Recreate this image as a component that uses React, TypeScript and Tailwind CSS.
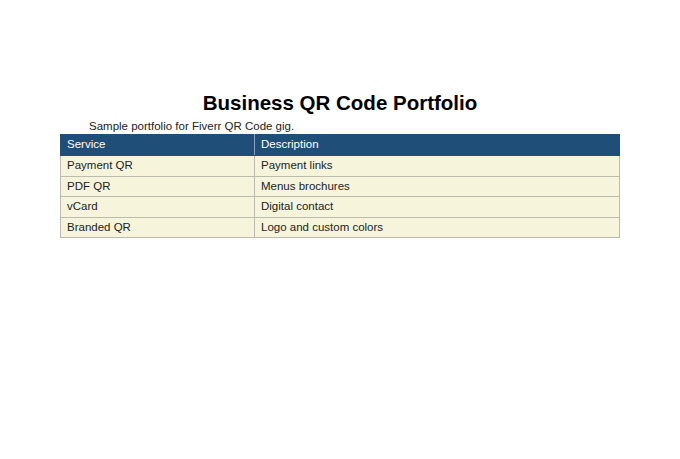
export default function App() {
  const rows = [
    ["Payment QR", "Payment links"],
    ["PDF QR", "Menus brochures"],
    ["vCard", "Digital contact"],
    ["Branded QR", "Logo and custom colors"],
  ];
  return (
    <div className="w-[680px] h-[459px] bg-white pt-[90px] pl-[60px]" style={{ fontFamily: '"Liberation Sans", Arial, sans-serif' }}>
      <div className="w-[560px]">
        <h1 className="text-center font-bold text-[20.5px] leading-[24px] text-black mt-[1px]">Business QR Code Portfolio</h1>
        <p className="text-[11.5px] leading-[14px] text-[#222] pl-[29px] mt-[4px]">Sample portfolio for Fiverr QR Code gig.</p>
        <table className="w-[560px] border-collapse text-[11.5px] mt-[1px]">
          <thead>
            <tr className="bg-[#1f4e79] text-white h-[21px]">
              <th className="w-[194px] text-left font-normal pl-[6px] border border-[#1f4e79] border-r-[#8aa0b8]">Service</th>
              <th className="text-left font-normal pl-[6px] border border-[#1f4e79]">Description</th>
            </tr>
          </thead>
          <tbody>
            {rows.map(([a, b]) => (
              <tr key={a} className="bg-[#f6f5dc] text-[#222] h-[20.5px]">
                <td className="pl-[6px] border border-[#bcbcae]">{a}</td>
                <td className="pl-[6px] border border-[#bcbcae]">{b}</td>
              </tr>
            ))}
          </tbody>
        </table>
      </div>
    </div>
  );
}
